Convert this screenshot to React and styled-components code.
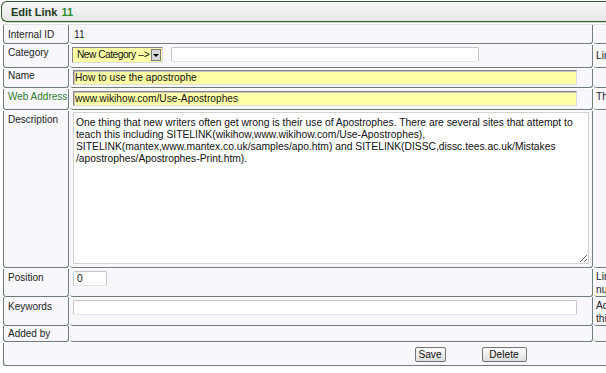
import React from "react";
import styled, { createGlobalStyle } from "styled-components";

const GlobalStyle = createGlobalStyle`
  html, body {
    margin: 0;
    overflow: hidden;
    background: #ffffff;
    font-family: "Liberation Sans", Arial, sans-serif;
    font-size: 10.2px;
    color: #222;
  }
`;

const LINE = "#6f7c7c";
const CELL_BG = "#f8f8fc";
const FONT = `10.2px "Liberation Sans", Arial, sans-serif`;

const Page = styled.div`
  width: 1000px;
  padding: 1px 0 0 1px;
`;

// header strip with the green rounded border
const TitleBar = styled.div`
  display: flex;
  align-items: center;
  gap: 4px;
  height: 19px;
  padding-left: 9px;
  border: 1px solid #2b5e24;
  border-right: none;
  border-radius: 6px 0 0 6px;
  background: linear-gradient(#f7f7f7, #e6e6e6);
  box-shadow: 0 1px 1px rgba(0, 0, 0, 0.18);
  font-size: 11px;
  font-weight: bold;
  color: #1d3a1d;
`;

const TitleId = styled.span`
  color: #2e8b2e;
`;

const Panel = styled.div`
  display: flex;
  flex-direction: column;
  gap: 1px;
  width: 934px;
  margin: 2px 0 0 2px;
  border-top: 1px solid #e2e2e8;
`;

const Row = styled.div`
  display: grid;
  grid-template-columns: 66px 523px 1fr;
  column-gap: 1px;
  height: ${p => p.$h}px;
`;

const Cell = styled.div`
  box-sizing: border-box;
  background: ${CELL_BG};
  border-right: 1px solid ${LINE};
  border-bottom: 1px solid ${LINE};
  border-radius: 0 0 3px 3px;
  line-height: 13px;
  white-space: nowrap;
`;

const LabelCell = styled(Cell)`
  border-left: 1px solid ${LINE};
  padding: ${p => p.$pt ?? 2}px 0 0 4px;
  font-size: 10px;
  color: ${p => (p.$accent ? "#2f7a2f" : "#222")};
`;

const ValueCell = styled(Cell)`
  display: flex;
  align-items: flex-start;
  gap: 8px;
  padding: ${p => p.$pt ?? 2}px 3px 0;
`;

const ValueText = styled.span`
  padding: 2px 0 0 1px;
`;

const HintCell = styled(Cell)`
  border-right: none;
  padding: ${p => p.$pt ?? 2}px 2px 0;
`;

const YellowInput = styled.input`
  box-sizing: border-box;
  width: 504px;
  height: 15px;
  padding: 0 1px;
  border: 1px solid;
  border-color: #858585 #dcdcdc #dcdcdc #858585;
  box-shadow: inset 1px 1px 0 #c4c4c4;
  background: #ffffa6;
  font: ${FONT};
  color: #111;
  outline: none;
`;

const PlainInput = styled.input`
  box-sizing: border-box;
  width: ${p => p.$w}px;
  height: 15px;
  padding: 0 3px;
  border: 1px solid #c6c6c6;
  border-bottom-color: #e4e4e4;
  border-radius: 2px;
  background: #ffffff;
  font: ${FONT};
  color: #111;
  outline: none;
`;

const SelectBox = styled.div`
  display: flex;
  align-items: stretch;
  box-sizing: border-box;
  width: 91px;
  height: 16px;
  margin-left: -1px;
  border: 1px solid;
  border-color: #858585 #dcdcdc #dcdcdc #858585;
  background: #ffffa6;
`;

const SelectText = styled.span`
  flex: 1;
  padding: 1px 0 0 4px;
  line-height: 12px;
  letter-spacing: -0.5px;
  white-space: nowrap;
  overflow: hidden;
  color: #111;
`;

const SelectArrow = styled.span`
  display: flex;
  align-items: center;
  justify-content: center;
  width: 8px;
  margin: 1px;
  border: 1px solid #7a7a7a;
  background: #d8d8d8;

  &::after {
    content: "";
    border-left: 3px solid transparent;
    border-right: 3px solid transparent;
    border-top: 3px solid #000;
  }
`;

const TextArea = styled.textarea`
  box-sizing: border-box;
  width: 516px;
  height: 152px;
  margin: -1px 0 0;
  padding: 4px 2px;
  border: 1px solid #d2d2d2;
  background: #ffffff;
  font: 10.3px "Liberation Sans", Arial, sans-serif;
  line-height: 12px;
  color: #111;
  outline: none;
`;

const ButtonRow = styled.div`
  display: flex;
  justify-content: center;
  align-items: center;
  gap: 36px;
  height: 23px;
  box-sizing: border-box;
  padding-top: 1px;
  background: ${CELL_BG};
  border-left: 1px solid ${LINE};
  border-bottom: 1px solid ${LINE};
  border-radius: 0 0 3px 3px;
  box-shadow: 0 2px 2px rgba(0, 0, 0, 0.14);
`;

const Button = styled.button`
  box-sizing: border-box;
  width: ${p => p.$w}px;
  height: 15px;
  padding: 0;
  border: 1px solid #737373;
  border-radius: 2px;
  background: linear-gradient(#fdfdfd, #dedede);
  font: ${FONT};
  color: #111;
`;

const description =
  "One thing that new writers often get wrong is their use of Apostrophes. There are several sites that attempt to teach this including SITELINK(wikihow,www.wikihow.com/Use-Apostrophes), SITELINK(mantex,www.mantex.co.uk/samples/apo.htm) and SITELINK(DISSC,dissc.tees.ac.uk/Mistakes /apostrophes/Apostrophes-Print.htm).";

export default function App() {
  return (
    <Page>
      <GlobalStyle />
      <TitleBar>
        Edit Link <TitleId>11</TitleId>
      </TitleBar>
      <Panel>
        <Row $h={19}>
          <LabelCell $pt={3}>Internal ID</LabelCell>
          <ValueCell $pt={1}>
            <ValueText>11</ValueText>
          </ValueCell>
          <HintCell />
        </Row>
        <Row $h={23}>
          <LabelCell $pt={1}>Category</LabelCell>
          <ValueCell>
            <SelectBox>
              <SelectText>New Category --&gt;</SelectText>
              <SelectArrow />
            </SelectBox>
            <PlainInput $w={308} defaultValue="" />
          </ValueCell>
          <HintCell $pt={4}>Link category, pick one or type a new name</HintCell>
        </Row>
        <Row $h={19}>
          <LabelCell $pt={0}>Name</LabelCell>
          <ValueCell $pt={1}>
            <YellowInput defaultValue="How to use the apostrophe" />
          </ValueCell>
          <HintCell />
        </Row>
        <Row $h={21}>
          <LabelCell $pt={1} $accent>Web Address</LabelCell>
          <ValueCell>
            <YellowInput defaultValue="www.wikihow.com/Use-Apostrophes" />
          </ValueCell>
          <HintCell $pt={1}>The full web address of the site</HintCell>
        </Row>
        <Row $h={157}>
          <LabelCell>Description</LabelCell>
          <ValueCell>
            <TextArea defaultValue={description} />
          </ValueCell>
          <HintCell />
        </Row>
        <Row $h={27}>
          <LabelCell>Position</LabelCell>
          <ValueCell>
            <PlainInput $w={34} defaultValue="0" />
          </ValueCell>
          <HintCell $pt={1}>
            Links are sorted by this
            <br />
            number
          </HintCell>
        </Row>
        <Row $h={28}>
          <LabelCell $pt={3}>Keywords</LabelCell>
          <ValueCell $pt={3}>
            <PlainInput $w={504} defaultValue="" />
          </ValueCell>
          <HintCell $pt={2}>
            Additional words to search for
            <br />
            this link
          </HintCell>
        </Row>
        <Row $h={16}>
          <LabelCell $pt={1}>Added by</LabelCell>
          <ValueCell />
          <HintCell />
        </Row>
        <ButtonRow>
          <Button $w={31}>Save</Button>
          <Button $w={45}>Delete</Button>
        </ButtonRow>
      </Panel>
    </Page>
  );
}
